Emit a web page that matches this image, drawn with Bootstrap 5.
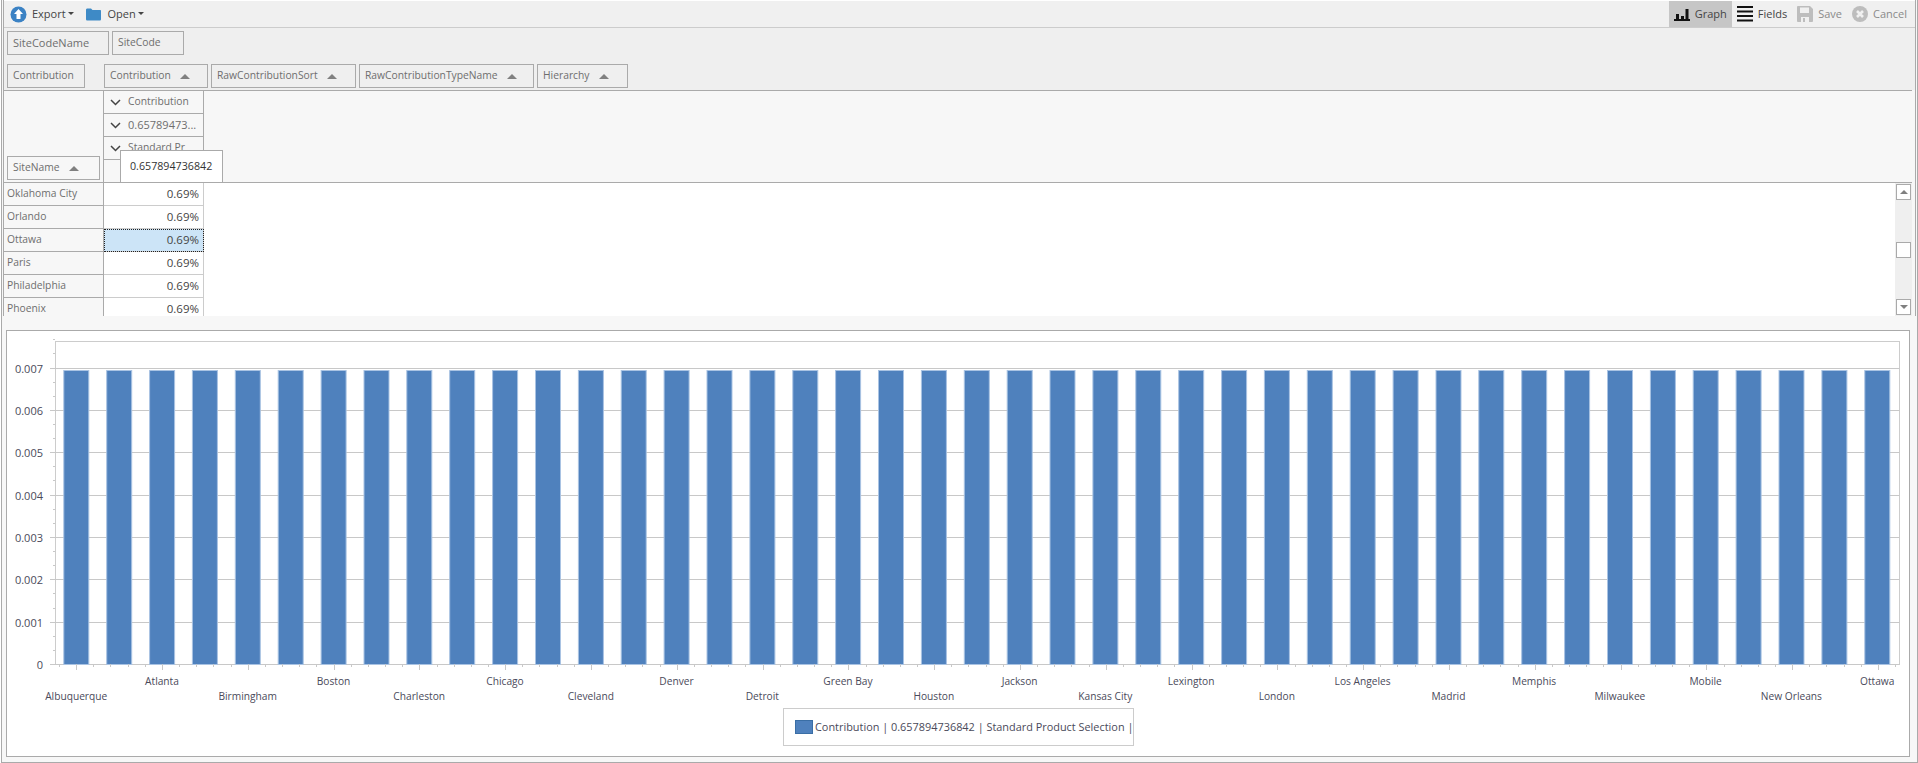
<!DOCTYPE html>
<html lang="en">
<head>
    <meta charset="UTF-8">
    <meta name="viewport" content="width=device-width, initial-scale=1.0">
    <title>Pivot Grid</title>
    <link href="https://cdn.jsdelivr.net/npm/bootstrap@5.3.0/dist/css/bootstrap.min.css" rel="stylesheet">
    <style>
        html, body { height: 100%; overflow: hidden; background: #fff; }
        body { font-family: "Open Sans", "Liberation Sans", sans-serif; font-size: 10.3px; color: #6e6e6e; }
        svg text { font-family: "Open Sans", "Liberation Sans", sans-serif; font-size: 10.2px; fill: #4a4a5a; }
        svg text.legend-text { font-size: 10.9px; }
        svg text.axis-text { font-size: 11px; }

        .app-frame { margin-left: 1px; width: 1917px; height: 763px; background: #f7f7f7; border: solid #aaa; border-width: 0 1px 1px 1px; }
        .top-panel { margin: 0 1px 0 1px; height: 316px; border-left: 1px solid #aaa; border-right: 1px solid #aaa; background: #f7f7f7; }

        .tool-bar { height: 28px; padding-top: 1px; background: #f0f0f0; border-bottom: 1px solid #ccc; box-shadow: inset 0 1px 0 #fff; color: #444; }
        .tool-btn { height: 26px; padding: 0 5px; gap: 5px; border: 0; border-radius: 0; background: none; font-size: 11px; color: #444; }
        .tool-btn.is-on { background: #c6c6c6; }
        .tool-btn.is-off { color: #8a8a8a; }
        .tool-btn svg { flex: none; }
        .tool-first { margin-left: 1px; }
        .tool-next { margin-left: 1px; }
        .tool-right { padding-right: 3px; }

        .filter-zone { height: 62px; background: #efefef; }
        .filter-row { gap: 3px; }
        .pad-top { padding: 3px 0 0 3px; height: 36px; }
        .field-chip { height: 24px; padding: 0 5px; gap: 9px; border: 1px solid #aaa; white-space: nowrap; }
        .chip-wide { font-size: 11px; }
        .left-slot { width: 100px; flex: none; padding-left: 3px; }
        .sort-up { width: 0; height: 0; border: 5px solid transparent; border-top: 0; border-bottom: 5px solid #808080; }

        .col-head { height: 93px; border-top: 1px solid #aaa; border-bottom: 1px solid #aaa; margin-right: 3px; position: relative; }
        .col-side { width: 99px; flex: none; padding: 0 0 2px 3px; }
        .col-stack { width: 101px; flex: none; border-left: 1px solid #aaa; border-right: 1px solid #aaa; }
        .col-cell { height: 23px; padding-left: 6px; gap: 7px; border-bottom: 1px solid #aaa; white-space: nowrap; overflow: hidden; }
        .col-num { font-size: 11px; }
        .col-blank { height: 22px; }
        .hover-tip { position: absolute; left: 116px; top: 59px; width: 103px; height: 32px; background: #fff; border: 1px solid #aaa; border-bottom: 0; color: #333; font-size: 10.7px; padding: 7px 0 0 9px; white-space: nowrap; }

        .data-zone { height: 133px; background: #fff; overflow: hidden; }
        .data-row { height: 23px; }
        .row-label { width: 100px; flex: none; padding-left: 3px; background: #f7f7f7; border-right: 1px solid #aaa; border-bottom: 1px solid #aaa; }
        .row-value { width: 100px; flex: none; padding-right: 4px; background: #fff; color: #444; font-size: 11.5px; border-right: 1px solid #ccc; border-bottom: 1px solid #ccc; }
        .row-value.is-picked { background: #cce4f7; outline: 1px dotted #222; outline-offset: -1px; }

        .scroll-rail { width: 17px; flex: none; background: #efefef; padding: 1px; }
        .scroll-gap { width: 3px; flex: none; }
        .scroll-btn { width: 15px; height: 16px; background: #fff; border: 1px solid #aaa; }
        .sort-down { width: 0; height: 0; border: 4px solid transparent; border-bottom: 0; border-top: 4px solid #808080; }
        .sort-tiny { width: 0; height: 0; border: 4px solid transparent; border-top: 0; border-bottom: 4px solid #808080; }

        .chart-box { margin: 14px 0 0 4px; width: 1904px; height: 427px; background: #fff; border: 1px solid #aaa; }
        .chart-box svg { display: block; }
    </style>
</head>
<body>
    <div class="app-frame">
        <div class="top-panel d-flex flex-column">
            <div class="tool-bar d-flex align-items-center">
                <button class="btn tool-btn tool-first d-flex align-items-center">
                    <svg width="17" height="17" viewBox="0 0 17 17"><circle cx="8.5" cy="8.5" r="8" fill="#3b82c4"/><path d="M8.5 3 13 8H10.5V13H6.5V8H4Z" fill="#fff"/></svg>
                    <span class="dropdown-toggle">Export</span>
                </button>
                <button class="btn tool-btn tool-next d-flex align-items-center">
                    <svg width="17" height="14" viewBox="0 0 17 14"><path d="M1 3C1 2 1.500 1.500 2.500 1.500H6L7.500 3H15C15.800 3 16 3.500 16 4V12C16 13 15.500 13.500 14.500 13.500H2.500C1.500 13.500 1 13 1 12Z" fill="#3e8ac6"/></svg>
                    <span class="dropdown-toggle">Open</span>
                </button>
                <div class="ms-auto d-flex tool-right">
                    <button class="btn tool-btn is-on d-flex align-items-center">
                        <svg width="16" height="14" viewBox="0 0 16 14"><path d="M0 12H16V14H0ZM2 7H5V12H2ZM7 9H10V12H7ZM11.500 2H14.500V12H11.500Z" fill="#111"/></svg>
                        <span>Graph</span>
                    </button>
                    <button class="btn tool-btn d-flex align-items-center">
                        <svg width="16" height="16" viewBox="0 0 16 16"><path d="M0 0H16V2H0ZM0 4.500H16V6.500H0ZM0 9H16V11H0ZM0 13.500H16V15.500H0Z" fill="#111"/></svg>
                        <span>Fields</span>
                    </button>
                    <button class="btn tool-btn is-off d-flex align-items-center">
                        <svg width="16" height="16" viewBox="0 0 16 16"><path d="M0 1C0 .5.500 0 1 0H13L16 3V15C16 15.500 15.500 16 15 16H1C.5 16 0 15.500 0 15Z" fill="#bdbdbd"/><path d="M3 1.500H12V7H3Z" fill="#f0f0f0"/><path d="M4 11H12V16H4Z" fill="#f0f0f0"/><path d="M6 12H8V16H6Z" fill="#bdbdbd"/></svg>
                        <span>Save</span>
                    </button>
                    <button class="btn tool-btn is-off d-flex align-items-center">
                        <svg width="16" height="16" viewBox="0 0 16 16"><circle cx="8" cy="8" r="8" fill="#bdbdbd"/><path d="M5 5 11 11M11 5 5 11" stroke="#f0f0f0" stroke-width="2.600"/></svg>
                        <span>Cancel</span>
                    </button>
                </div>
            </div>

            <div class="filter-zone">
                <div class="filter-row pad-top d-flex">
                    <div class="field-chip chip-wide d-flex align-items-center" style="width:102px">SiteCodeName</div>
                    <div class="field-chip d-flex align-items-center" style="width:72px">SiteCode</div>
                </div>
                <div class="d-flex">
                    <div class="left-slot"><div class="field-chip d-flex align-items-center" style="width:78px">Contribution</div></div>
                    <div class="filter-row d-flex">
                        <div class="field-chip d-flex align-items-center" style="width:104px">Contribution <i class="sort-up"></i></div>
                        <div class="field-chip d-flex align-items-center" style="width:145px">RawContributionSort <i class="sort-up"></i></div>
                        <div class="field-chip d-flex align-items-center" style="width:175px">RawContributionTypeName <i class="sort-up"></i></div>
                        <div class="field-chip d-flex align-items-center" style="width:91px">Hierarchy <i class="sort-up"></i></div>
                    </div>
                </div>
            </div>

            <div class="col-head d-flex">
                <div class="col-side d-flex align-items-end">
                    <div class="field-chip d-flex align-items-center" style="width:93px">SiteName <i class="sort-up"></i></div>
                </div>
                <div class="col-stack">
                    <div class="col-cell d-flex align-items-center" id="head1"></div>
                    <div class="col-cell col-num d-flex align-items-center" id="head2"></div>
                    <div class="col-cell d-flex align-items-center" id="head3"></div>
                    <div class="col-blank"></div>
                </div>
                <div class="hover-tip">0.657894736842</div>
            </div>

            <div class="d-flex flex-grow-1" style="min-height:0">
                <div class="data-zone flex-grow-1" id="dataRows"></div>
                <div class="scroll-rail d-flex flex-column justify-content-between align-items-center">
                    <div class="scroll-btn d-flex align-items-center justify-content-center"><i class="sort-tiny"></i></div>
                    <div class="scroll-btn"></div>
                    <div class="scroll-btn d-flex align-items-center justify-content-center"><i class="sort-down"></i></div>
                </div>
                <div class="scroll-gap"></div>
            </div>
        </div>

        <div class="chart-box">
            <svg id="chart" width="1902" height="425" viewBox="7 331 1902 425"></svg>
        </div>
    </div>

    <script>
        let chevron = '<svg width="11" height="7" viewBox="0 0 11 7" style="flex:none"><path d="M1 1 5.500 5.500 10 1" fill="none" stroke="#444" stroke-width="1.500"/></svg>';
        document.getElementById("head1").innerHTML = chevron + "<span>Contribution</span>";
        document.getElementById("head2").innerHTML = chevron + "<span>0.65789473...</span>";
        document.getElementById("head3").innerHTML = chevron + "<span>Standard Pr</span>";

        let sites = ["Oklahoma City", "Orlando", "Ottawa", "Paris", "Philadelphia", "Phoenix"];
        let rows = "";
        sites.forEach((site) => {
            let picked = site === "Ottawa" ? " is-picked" : "";
            rows += `<div class="data-row d-flex">
                <div class="row-label d-flex align-items-center">${site}</div>
                <div class="row-value d-flex align-items-center justify-content-end${picked}">0.69%</div>
            </div>`;
        });
        document.getElementById("dataRows").innerHTML = rows;

        let labels = ["Albuquerque", "Atlanta", "Birmingham", "Boston", "Charleston", "Chicago", "Cleveland", "Denver", "Detroit", "Green Bay", "Houston", "Jackson", "Kansas City", "Lexington", "London", "Los Angeles", "Madrid", "Memphis", "Milwaukee", "Mobile", "New Orleans", "Ottawa"];
        let plotLeft = 55.5, plotRight = 1899.5, plotTop = 341.5, plotBottom = 664.5;
        let out = `<rect x="${plotLeft}" y="${plotTop}" width="${plotRight - plotLeft}" height="${plotBottom - plotTop}" fill="#fff" stroke="#ccc"/>`;

        // y axis: gridline every 0.001, two minor ticks between
        let step = 42.35;
        for (let i = 0; i <= 7; i++) {
            let y = Math.round(664 - i * step) + 0.5;
            out += `<path d="M50 ${y}H${plotRight}" stroke="#c8c8c8"/>`;
            out += `<text class="axis-text" x="43" y="${y + 4}" text-anchor="end">${i === 0 ? "0" : (i / 1000).toFixed(3)}</text>`;
        }
        for (let i = 1; i <= 23; i++) {
            if (i % 3 === 0) continue;
            let y = Math.round(664 - i * step / 3) + 0.5;
            out += `<path d="M53 ${y}H55" stroke="#c8c8c8"/>`;
        }

        // bars
        for (let i = 0; i < 43; i++) {
            let x = 63.8 + i * 42.88;
            out += `<rect x="${x.toFixed(1)}" y="370.5" width="25" height="294" fill="#4f81bd" stroke="#a9c3e3" stroke-width="1"/>`;
        }

        // x axis ticks and staggered labels
        for (let i = 0; i < 108; i++) {
            let x = 59 + i * 17.16;
            if (x > plotRight - 4) break;
            let major = (i - 1) % 5 === 0;
            let px = Math.round(x) + 0.5;
            out += `<path d="M${px} 664V${major ? 670 : 667}" stroke="#c8c8c8"/>`;
        }
        labels.forEach((label, i) => {
            let x = 76.2 + i * 85.76;
            let y = i % 2 === 0 ? 700 : 685;
            out += `<text x="${x.toFixed(1)}" y="${y}" text-anchor="middle">${label}</text>`;
        });

        // legend
        out += `<rect x="783.500" y="708.500" width="350" height="37" fill="#fff" stroke="#ccc"/>`;
        out += `<rect x="795.500" y="720.500" width="17" height="13" fill="#4f81bd" stroke="#3a6ea5"/>`;
        out += `<text class="legend-text" x="815" y="730.500">Contribution | 0.657894736842 | Standard Product Selection |</text>`;
        document.getElementById("chart").innerHTML = out;
    </script>
    <script src="https://cdn.jsdelivr.net/npm/bootstrap@5.3.0/dist/js/bootstrap.bundle.min.js"></script>
</body>
</html>
